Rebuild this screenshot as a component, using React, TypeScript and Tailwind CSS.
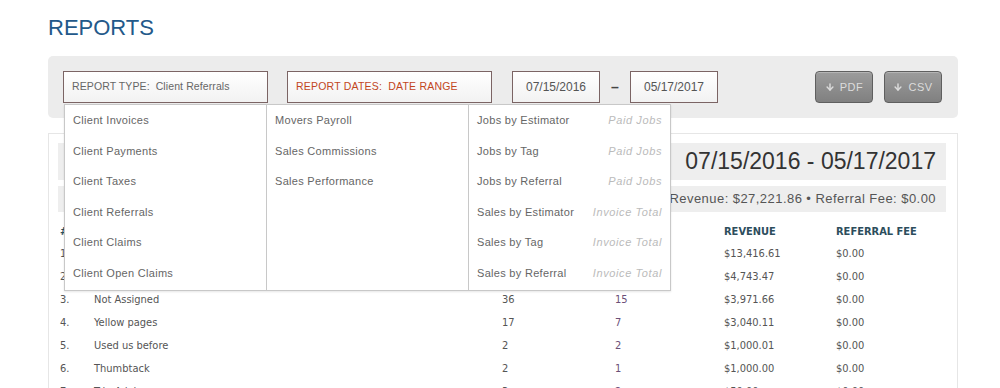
import { ArrowDown } from 'lucide-react'

const col1 = ['Client Invoices', 'Client Payments', 'Client Taxes', 'Client Referrals', 'Client Claims', 'Client Open Claims']
const col2 = ['Movers Payroll', 'Sales Commissions', 'Sales Performance']
const col3 = [
  ['Jobs by Estimator', 'Paid Jobs'],
  ['Jobs by Tag', 'Paid Jobs'],
  ['Jobs by Referral', 'Paid Jobs'],
  ['Sales by Estimator', 'Invoice Total'],
  ['Sales by Tag', 'Invoice Total'],
  ['Sales by Referral', 'Invoice Total'],
]

const rows = [
  ['1.', 'Google', '98', '41', '$13,416.61', '$0.00'],
  ['2.', 'Friend / Family', '31', '12', '$4,743.47', '$0.00'],
  ['3.', 'Not Assigned', '36', '15', '$3,971.66', '$0.00'],
  ['4.', 'Yellow pages', '17', '7', '$3,040.11', '$0.00'],
  ['5.', 'Used us before', '2', '2', '$1,000.01', '$0.00'],
  ['6.', 'Thumbtack', '2', '1', '$1,000.00', '$0.00'],
  ['7.', 'Trip Advisor', '3', '2', '$50.00', '$0.00'],
]

const arial = "font-['Liberation_Sans',Arial,sans-serif]"
const narrow = "font-['Liberation_Sans_Narrow','Arial_Narrow','DejaVu_Sans_Condensed',sans-serif]"

function Box({ children, className }: { children: React.ReactNode; className?: string }) {
  return (
    <div
      className={`h-[32px] flex items-center border border-[#7b6464] bg-gradient-to-b from-white to-[#f2f2f2] ${className ?? ''}`}
    >
      {children}
    </div>
  )
}

function ExportButton({ label }: { label: string }) {
  return (
    <button
      type="button"
      className="w-[58px] h-[32px] flex items-center justify-center gap-[5px] rounded-[4px] border border-[#5f5f5f] bg-gradient-to-b from-[#9c9c9c] to-[#808080] text-[#dcdcdc] text-[11px] tracking-[0.5px] shadow-[inset_0_1px_0_rgba(255,255,255,0.25)]"
    >
      <ArrowDown className="w-[10px] h-[10px]" strokeWidth={3.5} />
      {label}
    </button>
  )
}

export default function App() {
  return (
    <div className={`w-[1000px] h-[388px] overflow-hidden bg-white ${arial}`}>
      <div className="ml-[48px] w-[910px]">
        <h1 className="mt-[15px] h-[26px] leading-[26px] text-[22px] text-[#23598a]">REPORTS</h1>

        {/* Toolbar */}
        <div className="relative mt-[15px] h-[62px] rounded-[5px] bg-[#ececec] flex items-center pl-[15px] pr-[16px]">
          <Box className="w-[205px] px-[8px] text-[10.5px] text-[#666]">
            <span className="tracking-[0.1px]">REPORT TYPE:&nbsp; Client Referrals</span>
          </Box>
          <Box className="ml-[19px] w-[205px] px-[8px] text-[10.5px] text-[#c2461d]">
            <span className="tracking-[0.2px]">REPORT DATES:&nbsp; DATE RANGE</span>
          </Box>
          <Box className="ml-[20px] w-[88px] justify-center text-[12px] text-[#555]">07/15/2016</Box>
          <span className="w-[30px] text-center text-[14px] text-[#444] font-bold">–</span>
          <Box className="w-[88px] justify-center text-[12px] text-[#555]">05/17/2017</Box>
          <div className="ml-auto flex gap-[11px]">
            <ExportButton label="PDF" />
            <ExportButton label="CSV" />
          </div>

          {/* Report type menu */}
          <div className="absolute left-[16px] top-[48px] z-10 w-[607px] flex bg-white border border-[#c8c8c8] shadow-[0_1px_2px_rgba(0,0,0,0.1)] text-[11px] text-[#666] tracking-[0.3px]">
            <div className="w-[202px] pb-[1px] border-r border-[#c8c8c8]">
              {col1.map(t => (
                <div key={t} className="h-[30.6px] flex items-center px-[8px]">{t}</div>
              ))}
            </div>
            <div className="w-[202px] border-r border-[#c8c8c8]">
              {col2.map(t => (
                <div key={t} className="h-[30.6px] flex items-center px-[8px]">{t}</div>
              ))}
            </div>
            <div className="flex-1">
              {col3.map(([t, s]) => (
                <div key={t} className="h-[30.6px] flex items-center justify-between px-[8px]">
                  <span>{t}</span>
                  <span className="italic text-[#bbb] tracking-[0.6px]">{s}</span>
                </div>
              ))}
            </div>
          </div>
        </div>

        {/* Report */}
        <div className="mt-[15px] border border-[#e6e6e6] pt-[9px] pl-[9px] pr-[11px]">
          <div className="h-[37px] bg-[#eeeeee] flex items-center justify-end pr-[10px] text-[23px] text-[#333]">
            07/15/2016 - 05/17/2017
          </div>
          <div className="mt-[6px] h-[26px] bg-[#eeeeee] flex items-center justify-end pr-[10px] text-[13px] text-[#555] tracking-[0.45px]">
            Revenue: $27,221.86 • Referral Fee: $0.00
          </div>

          <div className={`mt-[10px] pl-[2px] ${narrow} text-[11px] text-[#555]`}>
            <div className="grid grid-cols-[34px_408px_113px_109px_112px_1fr] h-[21px] items-center font-bold text-[#2c4d5c]">
              <span>#</span>
              <span>REFERRAL SOURCE</span>
              <span>JOBS</span>
              <span>PAID JOBS</span>
              <span>REVENUE</span>
              <span>REFERRAL FEE</span>
            </div>
            {rows.map(r => (
              <div key={r[0]} className="grid grid-cols-[34px_408px_113px_109px_112px_1fr] h-[23px] items-center">
                <span>{r[0]}</span>
                <span>{r[1]}</span>
                <span>{r[2]}</span>
                <span className="text-[#6b4f78]">{r[3]}</span>
                <span>{r[4]}</span>
                <span>{r[5]}</span>
              </div>
            ))}
          </div>
        </div>
      </div>
    </div>
  )
}
